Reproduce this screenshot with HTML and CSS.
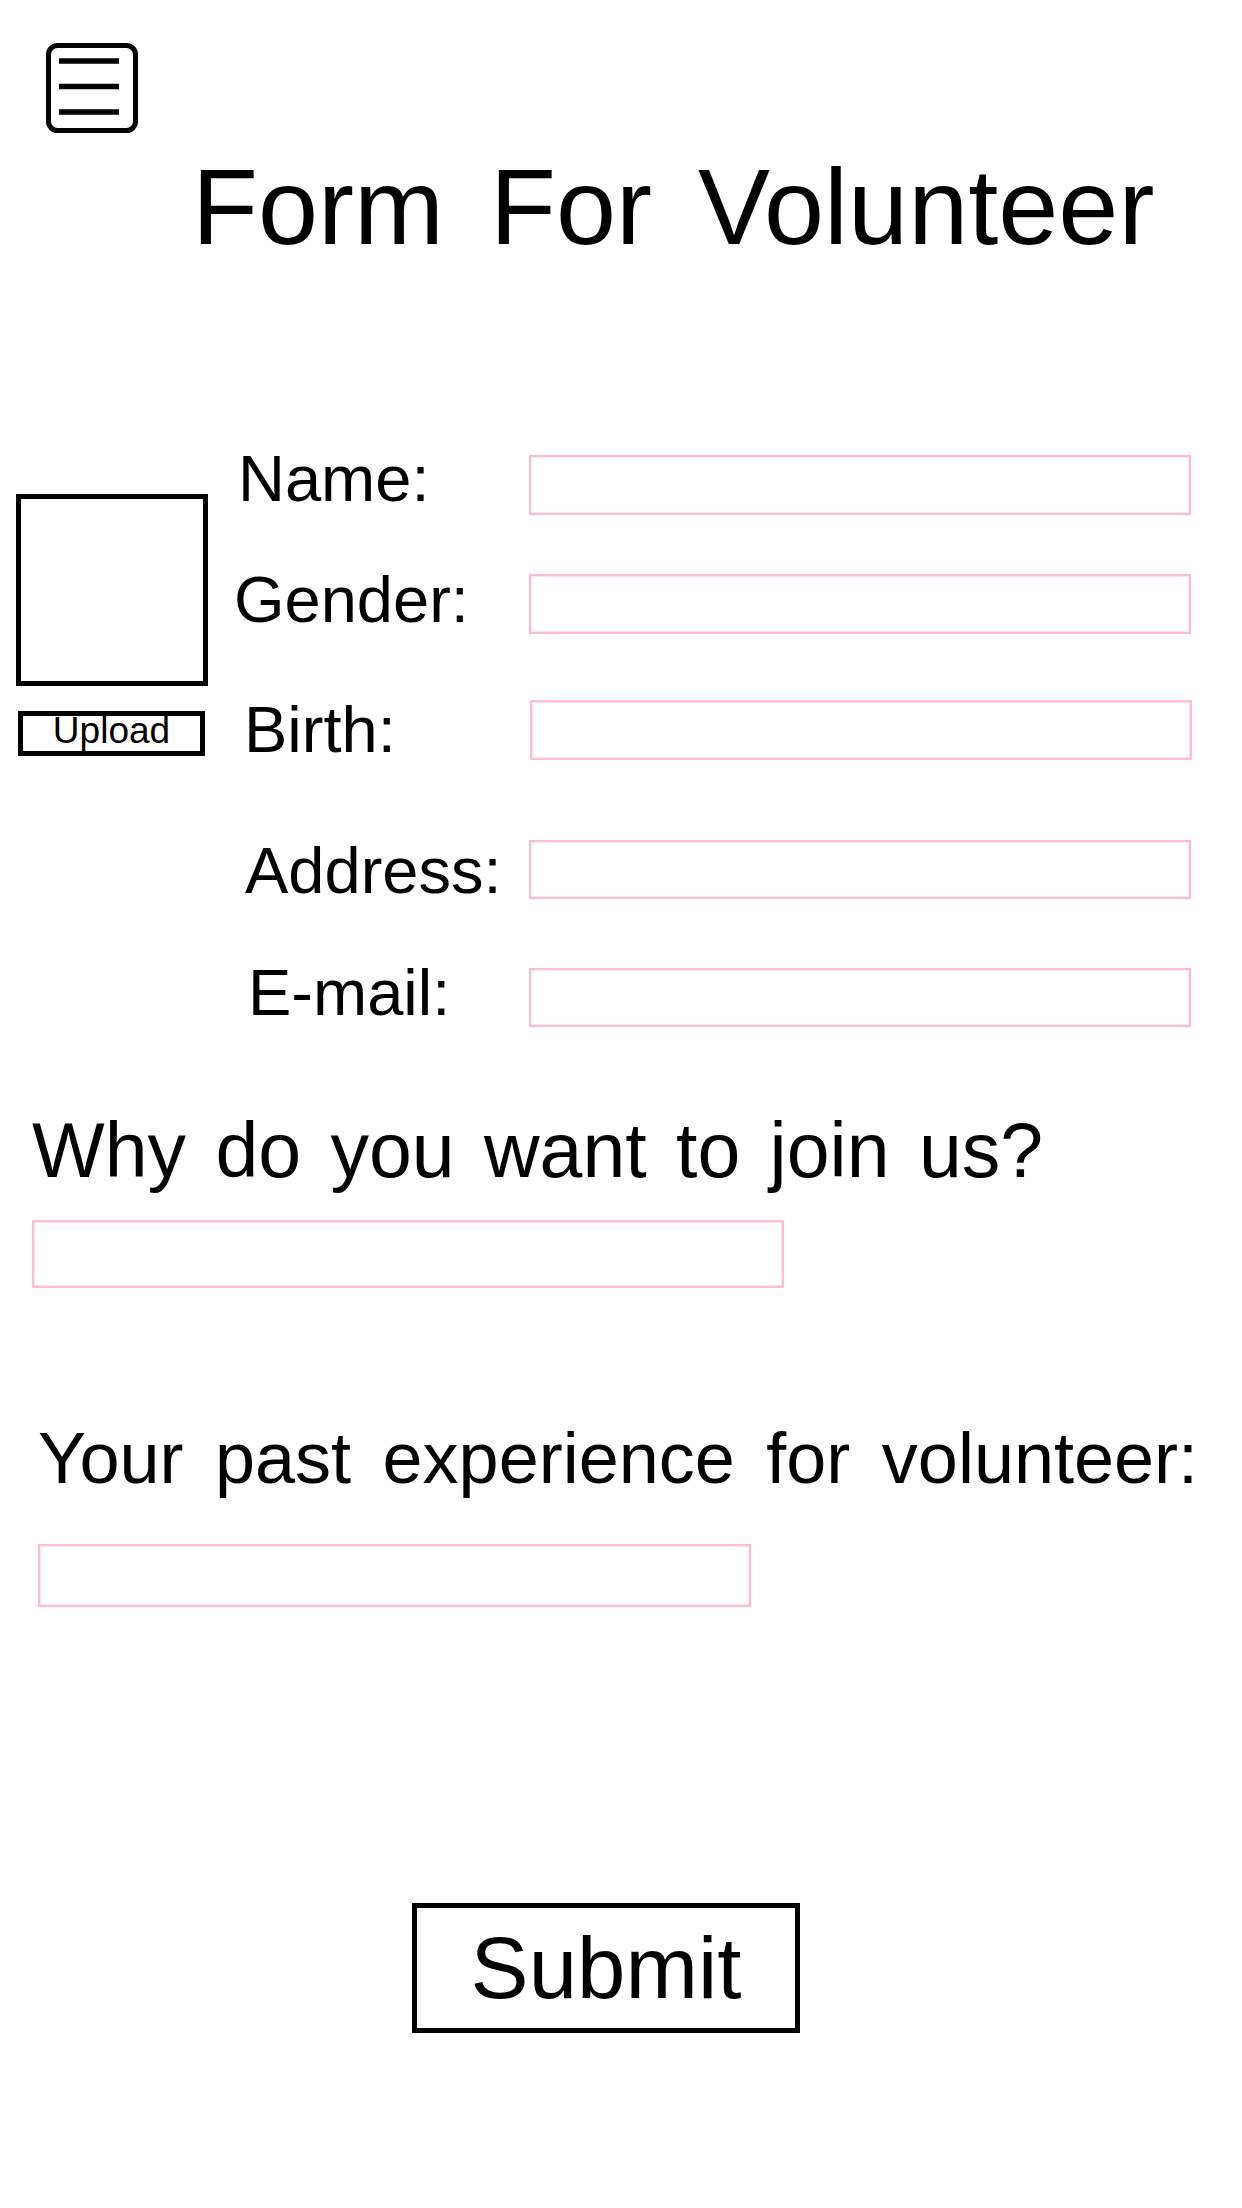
FILE: index.html
```html
<!DOCTYPE html>
<html lang="en">
<head>
<meta charset="utf-8">
<title>Form For Volunteer</title>
<link rel="stylesheet" href="styles.css">
</head>
<body>
<header class="top">
  <button class="menu" type="button" aria-label="Menu">
    <svg width="92" height="90" viewBox="0 0 92 90">
      <rect x="2.5" y="2.5" width="87" height="85" rx="9" ry="9" fill="none" stroke="#000" stroke-width="5"/>
      <line x1="13" y1="18" x2="73" y2="18" stroke="#000" stroke-width="5.5"/>
      <line x1="13" y1="43.5" x2="73" y2="43.5" stroke="#000" stroke-width="5.5"/>
      <line x1="13" y1="69" x2="73" y2="69" stroke="#000" stroke-width="5.5"/>
    </svg>
  </button>
  <h1 class="title">Form For Volunteer</h1>
</header>

<form class="form">
  <div class="info-grid">
    <div class="photo-col">
      <div class="photo"></div>
      <button class="upload" type="button">Upload</button>
    </div>

    <label class="label label-name">Name:</label>
    <input class="field row-1" type="text">

    <label class="label label-gender">Gender:</label>
    <input class="field row-2" type="text">

    <label class="label label-birth">Birth:</label>
    <input class="field row-3 field-birth" type="text">

    <label class="label label-address">Address:</label>
    <input class="field row-4" type="text">

    <label class="label label-email">E-mail:</label>
    <input class="field row-5" type="text">
  </div>

  <section class="question q-why">
    <p class="q-text">Why do you want to join us?</p>
    <input class="answer answer-why" type="text">
  </section>

  <section class="question q-past">
    <p class="q-text">Your past experience for volunteer:</p>
    <input class="answer answer-past" type="text">
  </section>

  <div class="submit-row">
    <button class="submit" type="submit">Submit</button>
  </div>
</form>
</body>
</html>
```

FILE: styles.css
```css
html, body {
  margin: 0;
  padding: 0;
  background: #ffffff;
}

body {
  font-family: "Liberation Sans", Arial, sans-serif;
  color: #000000;
  width: 1242px;
  min-height: 2208px;
}

/* ---------- header ---------- */
.top {
  display: flex;
  flex-direction: column;
}

.menu {
  display: block;
  margin: 43px 0 0 46px;
  padding: 0;
  border: none;
  background: none;
  width: 92px;
  height: 90px;
  cursor: pointer;
}

.menu svg {
  display: block;
}

.title {
  margin: 12px 0 0 0;
  padding-left: 192px;
  font-size: 108px;
  line-height: 124px;
  font-weight: normal;
  word-spacing: 16px;
  white-space: nowrap;
}

/* ---------- personal info grid ---------- */
.form {
  display: block;
}

.info-grid {
  margin-top: 186px;
  display: grid;
  grid-template-columns: 226px 303px 662px;
  grid-template-rows: 60px 59px 60px 66px 60px 80px 59px 69px 59px;
}

.photo-col {
  grid-column: 1;
  grid-row: 1 / 8;
  align-self: start;
  margin: 39px 0 0 16px;
  display: flex;
  flex-direction: column;
  gap: 25px;
}

.photo {
  width: 192px;
  height: 192px;
  box-sizing: border-box;
  border: 5px solid #000;
  background: #fff;
}

.upload {
  margin: 0 0 0 2px;
  width: 187px;
  height: 45px;
  box-sizing: border-box;
  border: 5px solid #000;
  background: #fff;
  padding: 0;
  font-family: inherit;
  font-size: 37px;
  line-height: 29px;
  color: #000;
  overflow: hidden;
  display: flex;
  justify-content: center;
  align-items: flex-start;
}

.label {
  grid-column: 2;
  font-size: 65px;
  line-height: 60px;
  white-space: nowrap;
}

.label-name    { grid-row: 1; padding-left: 12px; margin-top: -6px; }
.label-gender  { grid-row: 3; padding-left: 8px;  margin-top: -4px; }
.label-birth   { grid-row: 5; padding-left: 18px; margin-top: 0; }
.label-address { grid-row: 7; padding-left: 19px; margin-top: 1px; }
.label-email   { grid-row: 9; padding-left: 22px; margin-top: -5px; }

.field,
.answer {
  -webkit-appearance: none;
  appearance: none;
  box-sizing: border-box;
  margin: 0;
  padding: 0;
  border: 2px solid #ffbccb;
  box-shadow: inset 0 0 0 1px #ffe4ea;
  background: #fff;
  outline: none;
  border-radius: 0;
  font-family: inherit;
}

.field {
  grid-column: 3;
  width: 662px;
  height: 100%;
}

.row-1 { grid-row: 1; }
.row-2 { grid-row: 3; }
.row-3 { grid-row: 5; }
.row-4 { grid-row: 7; }
.row-5 { grid-row: 9; }

.field-birth {
  margin-left: 1px;
}

/* ---------- questions ---------- */
.question {
  display: flex;
  flex-direction: column;
  align-items: flex-start;
}

.q-text {
  margin: 0;
  white-space: nowrap;
}

.q-why {
  margin-top: 79px;
}

.q-why .q-text {
  padding-left: 32px;
  font-size: 77px;
  line-height: 88px;
  word-spacing: 8px;
}

.answer-why {
  margin: 26px 0 0 32px;
  width: 752px;
  height: 68px;
}

.q-past {
  margin-top: 129px;
}

.q-past .q-text {
  padding-left: 38px;
  font-size: 72px;
  line-height: 82px;
  word-spacing: 11.5px;
}

.answer-past {
  margin: 45px 0 0 38px;
  width: 713px;
  height: 63px;
}

/* ---------- submit ---------- */
.submit-row {
  margin-top: 296px;
  padding-left: 412px;
}

.submit {
  display: flex;
  justify-content: center;
  align-items: center;
  width: 388px;
  height: 130px;
  box-sizing: border-box;
  border: 5px solid #000;
  background: #fff;
  padding: 0;
  font-family: inherit;
  font-size: 87px;
  color: #000;
  cursor: pointer;
}
```
